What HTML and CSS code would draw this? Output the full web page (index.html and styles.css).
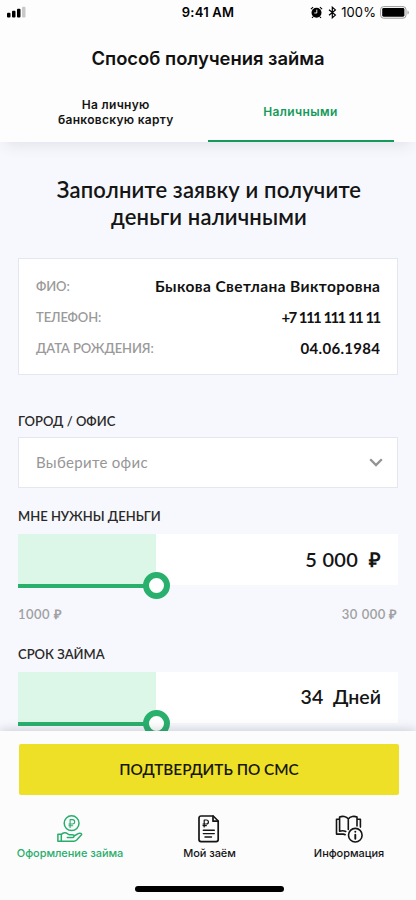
FILE: index.html
```html
<!DOCTYPE html>
<html lang="ru">
<head>
<meta charset="utf-8">
<meta name="viewport" content="width=device-width, initial-scale=1">
<title>Способ получения займа</title>
<link rel="stylesheet" href="styles.css">
</head>
<body>
<div class="screen">
  <header class="header">
    <div class="status">
      <svg class="signal" width="19" height="12" viewBox="0 0 19 12"><rect x="0" y="6.8" width="3.5" height="4.7" rx="1"/><rect x="5" y="4.8" width="3.5" height="6.7" rx="1"/><rect x="10" y="2.8" width="3.5" height="8.7" rx="1"/><rect x="15" y=".7" width="3.5" height="10.8" rx="1" fill="#c9c9c9"/></svg>
      <span class="clock">9:41 AM</span>
      <div class="status-right">
        <svg width="13" height="13" viewBox="0 0 13 13"><circle cx="6.5" cy="6.7" r="5"/><path d="M.9 3.2 3.1 1.2M12.1 3.2 9.9 1.2M3 10.8l-1 1.1M10 10.8l1 1.1" stroke="#000" stroke-width="1.1" fill="none"/><path d="M6.8 3.6V7H4.3" stroke="#fff" stroke-width=".9" fill="none"/></svg>
        <svg class="bluetooth" width="9" height="13" viewBox="0 0 9 13"><path d="M1 3.7 7.4 9.1 4.3 11.8V1.2L7.4 3.9 1 9.3" fill="none" stroke="#000" stroke-width="1.2"/></svg>
        <span class="percent">100%</span>
        <svg class="battery" width="30" height="13" viewBox="0 0 30 13"><rect x=".6" y=".6" width="25.4" height="11.6" rx="3" fill="none" stroke="#999" stroke-width="1"/><rect x="2.2" y="2.1" width="22.2" height="8.6" rx="1.4"/><path d="M27.5 4.4c1.8.8 1.8 3.2 0 4z" fill="#999"/></svg>
      </div>
    </div>
    <h1 class="title">Способ получения займа</h1>
    <nav class="tabs">
      <a class="tab">На личную<br>банковскую карту</a>
      <a class="tab tab-active">Наличными</a>
    </nav>
  </header>

  <main class="content">
    <h2 class="heading">Заполните заявку и получите деньги наличными</h2>
    <dl class="card">
      <div class="row"><dt>ФИО:</dt><dd class="name">Быкова Светлана Викторовна</dd></div>
      <div class="row"><dt>ТЕЛЕФОН:</dt><dd class="phone">+7 111 111 11 11</dd></div>
      <div class="row"><dt>ДАТА РОЖДЕНИЯ:</dt><dd class="birth">04.06.1984</dd></div>
    </dl>
    <div class="label">ГОРОД / ОФИС</div>
    <div class="select">
      <span>Выберите офис</span>
      <svg width="14" height="9" viewBox="0 0 14 9"><path d="m1.2 1.3 5.8 5.8 5.8-5.8" fill="none" stroke="#939393" stroke-width="2.3"/></svg>
    </div>
    <div class="label">МНЕ НУЖНЫ ДЕНЬГИ</div>
    <div class="slider"><div class="fill"><i class="knob"></i></div><div class="value amount">5 000&nbsp; ₽</div></div>
    <div class="range"><span>1000 ₽</span><span>30 000 ₽</span></div>
    <div class="label">СРОК ЗАЙМА</div>
    <div class="slider"><div class="fill"><i class="knob"></i></div><div class="value">34&nbsp; Дней</div></div>
  </main>

  <footer class="footer">
    <button class="submit">ПОДТВЕРДИТЬ ПО СМС</button>
    <nav class="bottom-nav">
      <a class="item item-active">
        <svg width="28" height="28" viewBox="0 0 28 28"><g fill="none" stroke="currentColor" stroke-width="1.5" stroke-linejoin="round" stroke-linecap="round"><circle cx="15.6" cy="8.2" r="7.4"/><path d="M14.1 12.4V4.6h2.4a2.2 2.2 0 0 1 0 4.4h-3.6M12.9 10.7h3.8" stroke-width="1.1"/><path d="M1.9 19.2h3.4v7H1.9zM5.3 19.4c2-2.2 4.6-2.2 6.3-.6l1.5.9h3.2c2.3 0 2.2 2.9 0 2.9h-5M18 21l4.2-2.4c1.9-1 4.1.1 3.3 1.2l-4.8 5.2c-.9.9-1.6 1.2-2.8 1.2H5.3"/></g></svg>
        <span>Оформление займа</span>
      </a>
      <a class="item">
        <svg width="28" height="28" viewBox="0 0 28 28"><g fill="none" stroke="currentColor" stroke-width="1.7" stroke-linejoin="round" stroke-linecap="round"><path d="M6 1h12.2l5 5v18.6a2 2 0 0 1-2 2H6a2 2 0 0 1-2-2V3a2 2 0 0 1 2-2z"/><path d="M18 1.2v5h5"/><path d="M9.2 12V5h2.2a2 2 0 0 1 0 4H8M8 10.6h3.4" stroke-width="1.2"/><path d="M8.3 15.2h11M8.3 18.6h11M10 22h6.5" stroke-width="1.4"/></g></svg>
        <span>Мой заём</span>
      </a>
      <a class="item">
        <svg width="30" height="28" viewBox="0 0 30 28"><g fill="none" stroke="currentColor" stroke-width="1.6" stroke-linejoin="round" stroke-linecap="round"><path d="M14.3 5v9.5M14.3 4C12.4 1.1 8.2.9 5.6 2v14.2c2.4-.7 4.6-.5 6.2.3M14.3 4C16.2 1.1 20.4.9 23 2v9M5.4 4.3H2.5v14.8h6.7c1 0 1.5.3 2 .6M23.4 4.3h3v7.8"/><circle cx="21.3" cy="20.2" r="6.8"/><path d="M21.3 19.8v4M21.3 16.6v.1" stroke-width="1.9"/></g></svg>
        <span>Информация</span>
      </a>
    </nav>
    <div class="home"></div>
  </footer>
</div>
</body>
</html>
```
FILE: styles.css
```css
* { box-sizing: border-box; }
body, h1, h2, dl, dd { margin: 0; }
body {
  font-family: Lato, "Open Sans", sans-serif;
  color: #151515;
}
.screen {
  height: 900px;
  display: flex;
  flex-direction: column;
  overflow: hidden;
  background: #f7f8fd;
}
.header {
  height: 142px;
  flex: none;
  display: flex;
  flex-direction: column;
  background: #fdfdfd;
  box-shadow: 0 8px 14px -5px rgba(60, 70, 90, .12);
  font-family: Inter, sans-serif;
}
.status {
  height: 24px;
  display: grid;
  grid-template-columns: 1fr auto 1fr;
  align-items: center;
  padding: 0 6px;
  color: #000;
}
.signal { margin: -1px 0 0 1px; }
.clock { font-size: 13px; font-weight: 600; letter-spacing: .2px; }
.status-right { display: flex; align-items: center; justify-content: flex-end; }
.bluetooth { margin: 0 4px 0 5px; }
.percent { font-size: 13px; letter-spacing: .1px; margin-right: 4px; }
.title {
  margin-top: 20px;
  font-size: 18.4px;
  line-height: 28px;
  font-weight: 600;
  text-align: center;
  color: #111;
}
.tabs {
  flex: 1;
  display: grid;
  grid-template-columns: 185.5px 186px;
  padding-left: 22px;
}
.tab {
  display: flex;
  align-items: center;
  justify-content: center;
  text-align: center;
  font-size: 12px;
  line-height: 15px;
  font-weight: 600;
  letter-spacing: .3px;
  padding: 10px 0 0 2px;
}
.tab-active {
  padding: 11px 0 0;
  color: #159a5b;
  border-bottom: 2px solid #159a5b;
  letter-spacing: .4px;
}
.content { flex: 1; min-height: 0; overflow: hidden; padding: 34px 18px 0; }
.heading {
  font-size: 22px;
  line-height: 27px;
  font-weight: 600;
  letter-spacing: .15px;
  text-align: center;
  padding: 0 33px 0 35px;
}
.card {
  margin-top: 28px;
  height: 117px;
  padding: 11px 17px;
  background: #fff;
  border: 1px solid #e5e7f0;
}
.row {
  height: 31px;
  display: flex;
  justify-content: space-between;
  align-items: center;
}
dt { font-size: 13px; font-weight: 600; letter-spacing: -.1px; color: #9a9a9a; }
dd { font-size: 15px; font-weight: 700; color: #111; }
.name { font-size: 15.5px; letter-spacing: .4px; margin-right: -.4px; }
.phone { letter-spacing: -1.6px; word-spacing: 1.2px; margin-right: .4px; }
.birth { letter-spacing: .3px; margin-right: -.3px; }
.label {
  height: 16px;
  margin-top: 38px;
  line-height: 16px;
  font-size: 13px;
  font-weight: 600;
  color: #292929;
}
.select {
  height: 51px;
  margin-top: 8px;
  padding: 0 14px 2px 17px;
  display: flex;
  justify-content: space-between;
  align-items: center;
  background: #fff;
  border: 1px solid #e5e7f0;
  font-size: 15px;
  letter-spacing: .3px;
  color: #969696;
}
.select svg { margin-top: 2px; }
.select + .label { margin-top: 20px; }
.slider {
  height: 51px;
  margin-top: 10px;
  display: flex;
  background: #fff;
}
.fill {
  position: relative;
  width: 138px;
  height: 54px;
  background: #dcf6e8;
  border-bottom: 4px solid #29b06d;
}
.knob {
  position: absolute;
  right: -14px;
  bottom: -15px;
  width: 27px;
  height: 27px;
  border: 6px solid #29b06d;
  border-radius: 50%;
  background: #fff;
}
.value {
  flex: 1;
  padding-right: 17px;
  text-align: right;
  line-height: 50px;
  font-size: 19.5px;
  font-weight: 600;
}
.amount { font-size: 20px; letter-spacing: .3px; }
.range {
  display: flex;
  justify-content: space-between;
  margin-top: 21px;
  height: 16px;
  line-height: 16px;
  font-size: 13px;
  font-weight: 600;
  letter-spacing: .5px;
  color: #a0a0a2;
}
.range + .label { margin-top: 24px; }
.footer {
  position: relative;
  flex: none;
  height: 169px;
  padding: 13px 17px 0 19px;
  background: #fcfcfd;
  box-shadow: 0 -1px 10px rgba(50, 60, 80, .23);
}
.submit {
  display: block;
  width: 100%;
  height: 51px;
  padding: 0 0 2px;
  border: 0;
  border-radius: 2px;
  background: #eee027;
  color: #17170c;
  font: 600 15.3px Lato, "Open Sans", sans-serif;
}
.bottom-nav {
  display: grid;
  grid-template-columns: repeat(3, 139.5px);
  justify-content: center;
  margin-top: 20px;
  font-family: Inter, sans-serif;
}
.item {
  display: flex;
  flex-direction: column;
  align-items: center;
  font-size: 11px;
  line-height: 16px;
  font-weight: 500;
  letter-spacing: -.05px;
  color: #151515;
  white-space: nowrap;
}
.item span { margin: 2px 0 0 1px; }
.item-active { color: #29ad6c; }
.home {
  width: 149px;
  height: 6px;
  margin: 25px auto 0;
  border-radius: 3px;
  background: #000;
}
```
